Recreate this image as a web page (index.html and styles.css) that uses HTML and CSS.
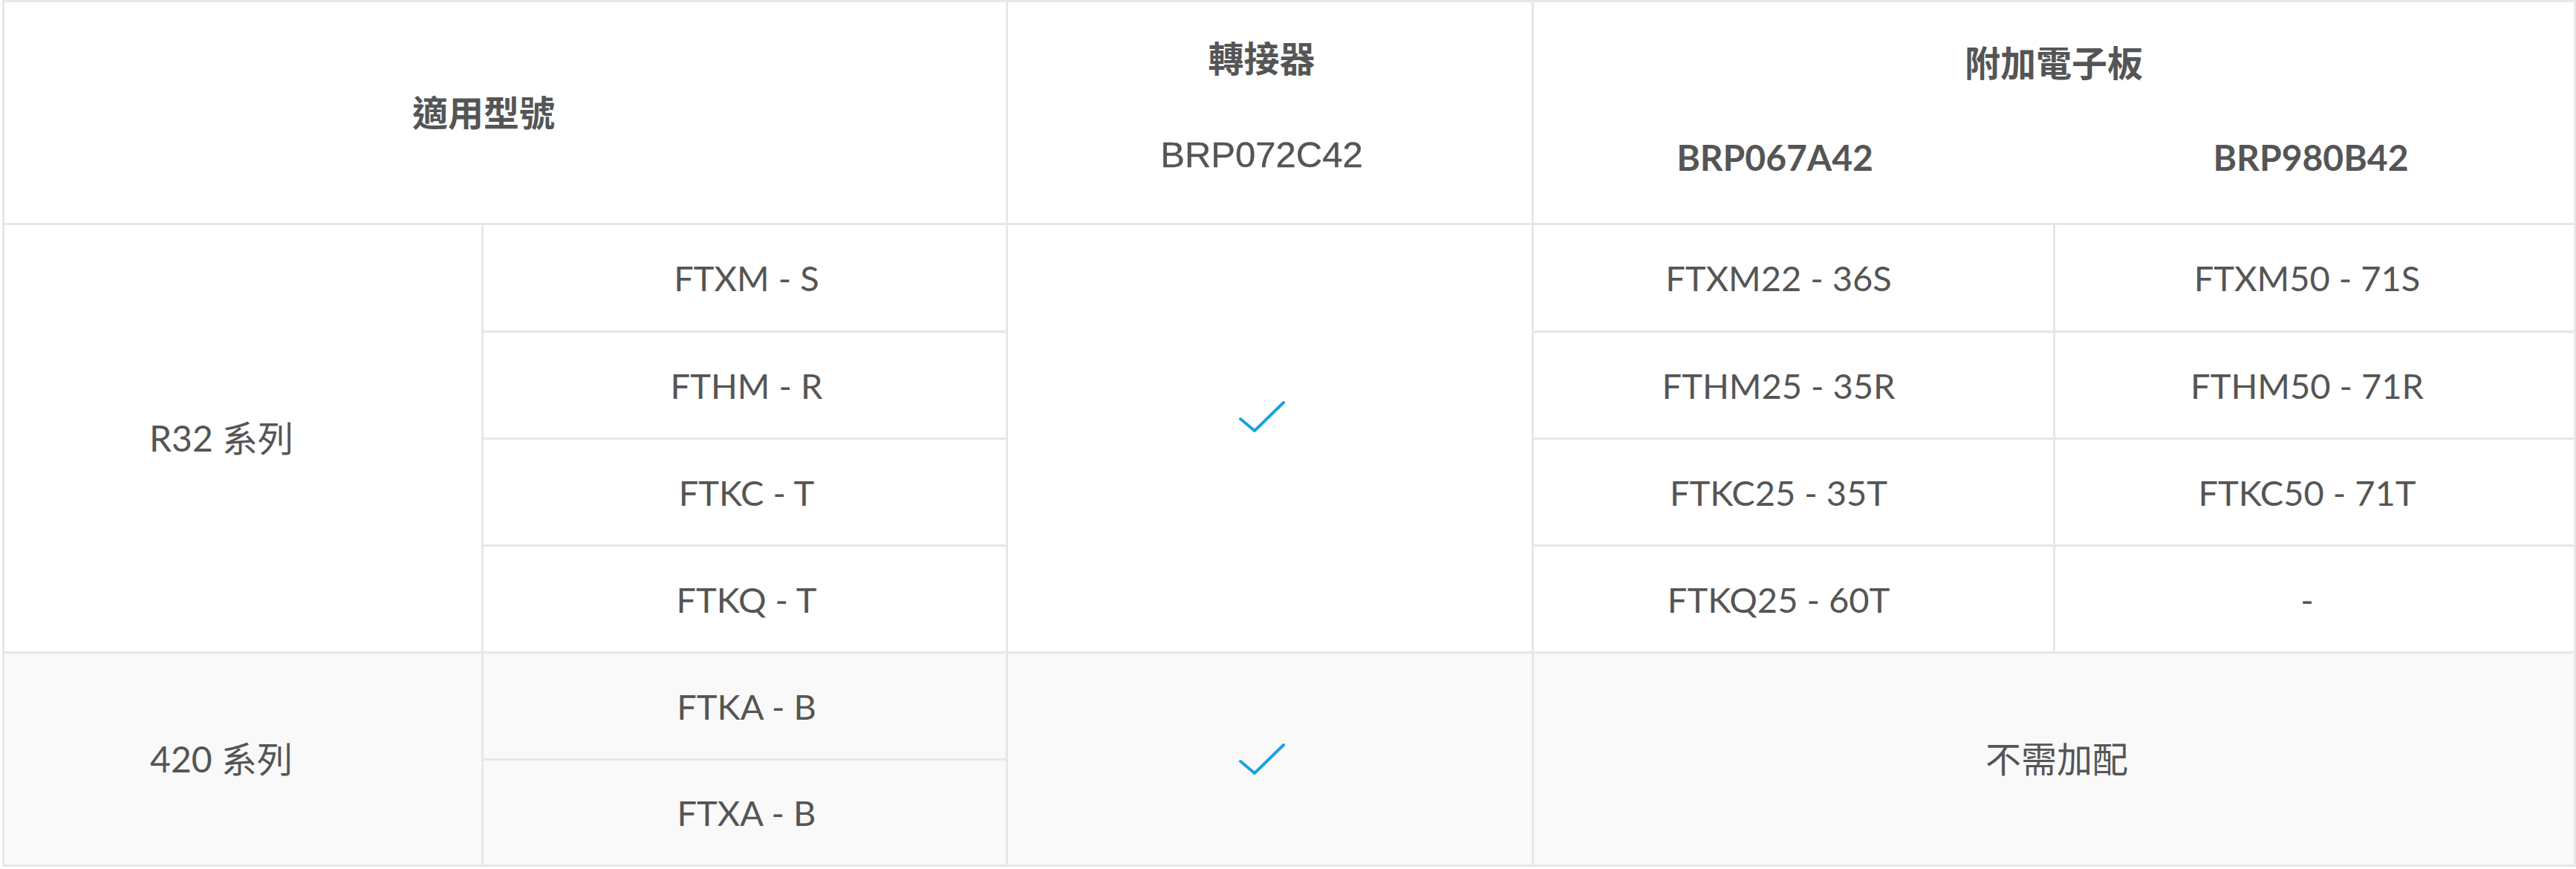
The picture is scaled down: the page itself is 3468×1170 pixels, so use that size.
FILE: index.html
```html
<!DOCTYPE html>
<html lang="zh-Hant">
<head>
<meta charset="utf-8">
<title>適用型號</title>
<link rel="stylesheet" href="styles.css">
</head>
<body>
<div class="spec">
  <div class="cell head h-model">適用型號</div>
  <div class="cell head h-adapter">
    <div class="h-title">轉接器</div>
    <div class="h-code-plain">BRP072C42</div>
  </div>
  <div class="cell head h-board">
    <div class="h-title">附加電子板</div>
    <div class="h-codes">
      <div class="h-code h-code-a">BRP067A42</div>
      <div class="h-code h-code-b">BRP980B42</div>
    </div>
  </div>

  <div class="cell c1 g-r32">R32 系列</div>
  <div class="cell c2 r2">FTXM - S</div>
  <div class="cell c2 r3">FTHM - R</div>
  <div class="cell c2 r4">FTKC - T</div>
  <div class="cell c2 r5">FTKQ - T</div>
  <div class="cell c3 g-r32 check-r32">
    <svg class="check" width="62" height="42" viewBox="0 0 62 42"><polyline points="2,24 21,40 60,2"/></svg>
  </div>
  <div class="cell c4 r2">FTXM22 - 36S</div>
  <div class="cell c5 r2">FTXM50 - 71S</div>
  <div class="cell c4 r3">FTHM25 - 35R</div>
  <div class="cell c5 r3">FTHM50 - 71R</div>
  <div class="cell c4 r4">FTKC25 - 35T</div>
  <div class="cell c5 r4">FTKC50 - 71T</div>
  <div class="cell c4 r5">FTKQ25 - 60T</div>
  <div class="cell c5 r5">-</div>

  <div class="cell alt c1 g-420">420 系列</div>
  <div class="cell alt c2 r6">FTKA - B</div>
  <div class="cell alt c2 r7">FTXA - B</div>
  <div class="cell alt c3 g-420">
    <svg class="check" width="62" height="42" viewBox="0 0 62 42"><polyline points="2,24 21,40 60,2"/></svg>
  </div>
  <div class="cell alt c45 g-420">不需加配</div>
</div>
</body>
</html>
```

FILE: styles.css
```css
html, body {
  margin: 0;
  padding: 0;
  background: #ffffff;
}

.spec {
  display: grid;
  grid-template-columns: 642px 703px 705px 699px 698px;
  grid-template-rows: 297px 142px 141px 141px 141px 141px 140px;
  gap: 3px;
  padding: 3px;
  margin-left: 3px;
  width: max-content;
  background: #e7e7e3;
}

.cell {
  background: #ffffff;
  display: flex;
  align-items: center;
  justify-content: center;
  font-family: Lato, "Noto Sans CJK TC", sans-serif;
  font-size: 48px;
  line-height: 60px;
  color: #555555;
  white-space: nowrap;
}

.alt {
  background: #f9f9f9;
}

.head {
  font-weight: 700;
}

.h-model {
  grid-column: 1 / 3;
  grid-row: 1;
  padding-right: 58px;
}

.h-adapter {
  grid-column: 3;
  grid-row: 1;
  flex-direction: column;
  justify-content: flex-start;
  padding-top: 46px;
  padding-right: 22px;
  gap: 69px;
}

.h-code-plain {
  font-family: "Liberation Sans", Arial, sans-serif;
  font-size: 49px;
  font-weight: 400;
  -webkit-text-stroke: 0.4px #555555;
}

.h-board {
  grid-column: 4 / 6;
  grid-row: 1;
  flex-direction: column;
  justify-content: flex-start;
  align-items: stretch;
  padding-top: 52px;
  gap: 67px;
}

.h-board .h-title {
  text-align: center;
}

.h-codes {
  display: grid;
  grid-template-columns: 699px 698px;
  column-gap: 3px;
}

.h-code {
  text-align: center;
}

.h-code-a {
  padding-right: 50px;
}

.h-code-b {
  padding-right: 10px;
}

.c1 { grid-column: 1; padding-right: 58px; }
.c2 { grid-column: 2; padding-left: 5px; font-size: 47px; }
.c3 { grid-column: 3; padding-right: 22px; }
.c4 { grid-column: 4; padding-right: 40px; font-size: 47px; }
.c5 { grid-column: 5; padding-right: 20px; font-size: 47px; }
.c45 { grid-column: 4 / 6; padding-left: 8px; }

.r2 { grid-row: 2; }
.r3 { grid-row: 3; }
.r4 { grid-row: 4; }
.r5 { grid-row: 5; }
.r6 { grid-row: 6; }
.r7 { grid-row: 7; }
.g-r32 { grid-row: 2 / 6; }
.g-420 { grid-row: 6 / 8; }

.check-r32 {
  padding-bottom: 59px;
}

.check {
  display: block;
  fill: none;
  stroke: #19a3de;
  stroke-width: 4;
  stroke-linecap: round;
  stroke-linejoin: round;
}
```
